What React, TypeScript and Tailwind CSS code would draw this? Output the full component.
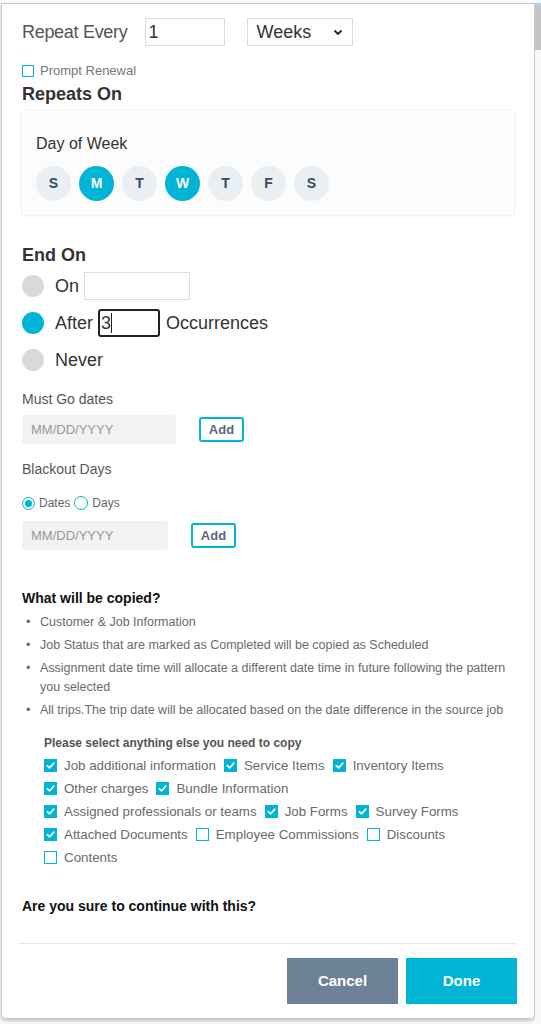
import React from "react";

function Check({ checked }: { checked: boolean }) {
  return checked ? (
    <span className="w-[13px] h-[13px] bg-[#00b4d6] flex items-center justify-center shrink-0">
      <svg width="11" height="11" viewBox="0 0 12 12">
        <path d="M2.5 6.2 L5 8.6 L9.6 3.4" fill="none" stroke="#fff" strokeWidth="1.8" strokeLinecap="round" strokeLinejoin="round" />
      </svg>
    </span>
  ) : (
    <span className="w-[13px] h-[13px] border border-[#00b4d6] bg-white shrink-0" />
  );
}

function CheckItem({ label, checked }: { label: string; checked: boolean }) {
  return (
    <span className="flex items-center mr-[8px]">
      <Check checked={checked} />
      <span className="ml-[7px] text-[13.33px] text-[#6a6a6a] whitespace-nowrap">{label}</span>
    </span>
  );
}

function Day({ l, on }: { l: string; on?: boolean }) {
  return (
    <span
      className={
        on
          ? "w-[35px] h-[35px] rounded-full bg-[#00b4d6] text-white flex items-center justify-center text-[14px] font-bold"
          : "w-[35px] h-[35px] rounded-full bg-[#eaeff3] text-[#3b4a5c] flex items-center justify-center text-[14px] font-bold"
      }
    >
      {l}
    </span>
  );
}

export default function App() {
  const font = { fontFamily: '"Liberation Sans", Arial, sans-serif' };
  return (
    <div className="w-[541px] h-[1024px] bg-white flex overflow-hidden" style={font}>
      <div className="w-[1px] shrink-0 bg-white" />
      <div className="mt-[3px] w-[534px] h-[1016px] shrink-0 border border-[#c8c8c8] rounded-b-[4px] shadow-[0_2px_4px_rgba(0,0,0,0.25)] bg-white flex flex-col">
        <div className="pl-[20px] flex flex-col">
          {/* Row 1 */}
          <div className="mt-[14px] h-[28px] flex items-center">
            <span className="text-[18px] text-[#555] tracking-[-0.3px]">Repeat Every</span>
            <div className="ml-[18px] w-[80px] h-[28px] border border-[#ddd] flex items-center pl-[2px] text-[18px] text-[#333]">1</div>
            <div className="ml-[22px] w-[106px] h-[28px] border border-[#ddd] flex items-center justify-between pl-[8px] pr-[8px] text-[18px] text-[#333]">
              <span>Weeks</span>
              <svg width="12" height="12" viewBox="0 0 12 12">
                <path d="M2.5 4.5 L6 8 L9.5 4.5" fill="none" stroke="#222" strokeWidth="1.8" />
              </svg>
            </div>
          </div>
          {/* Prompt renewal */}
          <div className="mt-[16px] h-[18px] flex items-center">
            <span className="w-[12px] h-[12px] border border-[#00b4d6]" />
            <span className="ml-[6px] text-[13px] text-[#777]">Prompt Renewal</span>
          </div>
          <div className="mt-[4px] h-[20px] flex items-center text-[18px] font-bold text-[#333]">Repeats On</div>
          {/* Box */}
          <div className="mt-[7px] mr-[20px] h-[104px] bg-[#fcfcfc] shadow-[0_0_3px_rgba(0,0,0,0.12)] pl-[14px] flex flex-col">
            <div className="mt-[24px] h-[18px] flex items-center text-[16px] text-[#333]">Day of Week</div>
            <div className="mt-[13px] flex gap-[8px]">
              <Day l="S" />
              <Day l="M" on />
              <Day l="T" />
              <Day l="W" on />
              <Day l="T" />
              <Day l="F" />
              <Day l="S" />
            </div>
          </div>
          {/* End On */}
          <div className="mt-[30px] h-[20px] flex items-center text-[18px] font-bold text-[#333]">End On</div>
          <div className="mt-[7px] h-[28px] flex items-center">
            <span className="w-[22px] h-[22px] rounded-full bg-[#d9d9d9]" />
            <span className="ml-[11px] text-[18px] text-[#333]">On</span>
            <span className="ml-[5px] w-[106px] h-[28px] border border-[#ddd]" />
          </div>
          <div className="mt-[9px] h-[28px] flex items-center">
            <span className="w-[22px] h-[22px] rounded-full bg-[#00b4d6]" />
            <span className="ml-[11px] text-[18px] text-[#333]">After</span>
            <span className="ml-[5px] w-[62px] h-[28px] border-2 border-[#222] rounded-[3px] flex items-center pl-[1px] text-[18px] text-[#333]">
              3<span className="w-[1px] h-[20px] bg-[#222]" />
            </span>
            <span className="ml-[6px] text-[18px] text-[#333]">Occurrences</span>
          </div>
          <div className="mt-[9px] h-[28px] flex items-center">
            <span className="w-[22px] h-[22px] rounded-full bg-[#d9d9d9]" />
            <span className="ml-[11px] text-[18px] text-[#333]">Never</span>
          </div>
          {/* Must Go */}
          <div className="mt-[16px] h-[18px] flex items-center text-[14px] text-[#555]">Must Go dates</div>
          <div className="mt-[7px] h-[29px] flex items-center">
            <div className="w-[154px] h-[29px] bg-[#f1f2f4] rounded-[3px] flex items-center pl-[9px] text-[13px] text-[#999]">MM/DD/YYYY</div>
            <div className="ml-[23px] w-[45px] h-[25px] border-2 border-[#00b4d6] rounded-[3px] flex items-center justify-center text-[13px] font-bold text-[#5a6878]">Add</div>
          </div>
          <div className="mt-[16px] h-[18px] flex items-center text-[14px] text-[#555]">Blackout Days</div>
          <div className="mt-[16px] h-[18px] flex items-center text-[12px] text-[#666]">
            <span className="w-[13px] h-[13px] rounded-full border border-[#00b4d6] flex items-center justify-center">
              <span className="w-[7px] h-[7px] rounded-full bg-[#00b4d6]" />
            </span>
            <span className="ml-[4px]">Dates</span>
            <span className="ml-[4px] w-[14px] h-[14px] rounded-full border border-[#00b4d6]" />
            <span className="ml-[4px]">Days</span>
          </div>
          <div className="mt-[9px] h-[29px] flex items-center">
            <div className="w-[146px] h-[29px] bg-[#f1f2f4] rounded-[3px] flex items-center pl-[9px] text-[13px] text-[#999]">MM/DD/YYYY</div>
            <div className="ml-[23px] w-[45px] h-[25px] border-2 border-[#00b4d6] rounded-[3px] flex items-center justify-center text-[13px] font-bold text-[#5a6878]">Add</div>
          </div>
          {/* What will be copied */}
          <div className="mt-[38px] h-[20px] flex items-center text-[14px] font-bold text-[#111]">What will be copied?</div>
          <ul className="mt-[5px] mr-[20px] flex flex-col gap-[4px] text-[12.5px] leading-[19px] text-[#6a6a6a]">
            {[
              "Customer & Job Information",
              "Job Status that are marked as Completed will be copied as Scheduled",
              "Assignment date time will allocate a different date time in future following the pattern you selected",
              "All trips.The trip date will be allocated based on the date difference in the source job",
            ].map((t) => (
              <li key={t} className="flex">
                <span className="w-[18px] shrink-0 pl-[4px]">•</span>
                <span className="max-w-[470px]">{t}</span>
              </li>
            ))}
          </ul>
          <div className="ml-[22px] flex flex-col">
            <div className="mt-[14px] h-[18px] flex items-center text-[12px] font-bold text-[#555]">Please select anything else you need to copy</div>
            <div className="mt-[2px] h-[23px] flex items-center">
              <CheckItem label="Job additional information" checked />
              <CheckItem label="Service Items" checked />
              <CheckItem label="Inventory Items" checked />
            </div>
            <div className="h-[23px] flex items-center">
              <CheckItem label="Other charges" checked />
              <CheckItem label="Bundle Information" checked />
            </div>
            <div className="h-[23px] flex items-center">
              <CheckItem label="Assigned professionals or teams" checked />
              <CheckItem label="Job Forms" checked />
              <CheckItem label="Survey Forms" checked />
            </div>
            <div className="h-[23px] flex items-center">
              <CheckItem label="Attached Documents" checked />
              <CheckItem label="Employee Commissions" checked={false} />
              <CheckItem label="Discounts" checked={false} />
            </div>
            <div className="h-[23px] flex items-center">
              <CheckItem label="Contents" checked={false} />
            </div>
          </div>
          <div className="mt-[27px] h-[20px] flex items-center text-[14px] font-bold text-[#111]">Are you sure to continue with this?</div>
        </div>
        <div className="mt-[27px] ml-[16px] mr-[17px] h-[1px] bg-[#e6e6e6]" />
        <div className="mt-[14px] mr-[17px] flex justify-end gap-[8px]">
          <div className="w-[111px] h-[46px] bg-[#6d8296] text-white text-[15px] font-bold flex items-center justify-center">Cancel</div>
          <div className="w-[111px] h-[46px] bg-[#00b4d6] text-white text-[15px] font-bold flex items-center justify-center">Done</div>
        </div>
      </div>
      <div className="flex-1 flex flex-col bg-[#f7f7f7]">
        <div className="mt-[3px] h-[3px] bg-[#9fd8ea]" />
        <div className="h-[44px] bg-[#c4c4c4]" />
      </div>
    </div>
  );
}
